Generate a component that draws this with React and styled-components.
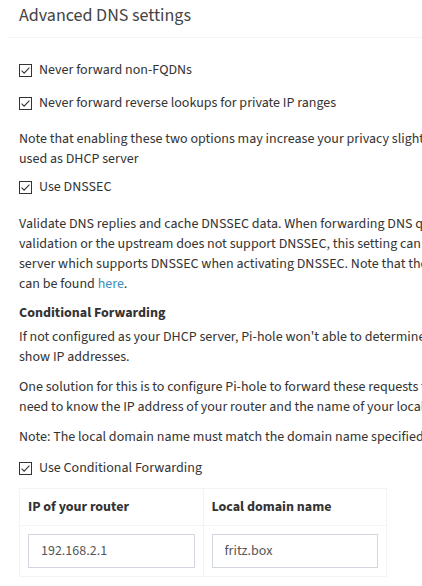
import React from "react";
import styled, { createGlobalStyle } from "styled-components";

const Global = createGlobalStyle`
  html, body { margin: 0; padding: 0; background: #fff; }
  body {
    font-family: "Source Sans 3", "Source Sans Pro", "Lato", sans-serif;
    font-size: 14px;
    line-height: 20px;
    color: #333;
    overflow: hidden;
  }
  * { box-sizing: border-box; }
`;

const Page = styled.div`
  width: 422px;
  height: 586px;
  overflow: hidden;
  background: #fff;
`;

const Box = styled.section`
  margin-left: 9px;
  width: 1100px;
`;

const BoxHeader = styled.header`
  padding: 6px 10px 11px;
  border-bottom: 1px solid #f4f4f4;
`;

const Title = styled.h3`
  margin: 0;
  font-size: 18px;
  line-height: 20px;
  font-weight: 400;
  color: #444;
`;

const BoxBody = styled.div`
  padding: 10px;
  display: flex;
  flex-direction: column;
  align-items: flex-start;
`;

const CheckRow = styled.label`
  display: flex;
  align-items: center;
  gap: 7px;
  height: 20px;
  margin-top: ${(p) => p.$mt}px;
  white-space: nowrap;
`;

const Text = styled.p`
  margin: ${(p) => p.$mt}px 0 0;
  white-space: nowrap;
`;

const Link = styled.a`
  color: #3c8dbc;
  text-decoration: none;
`;

const SubHeading = styled.h4`
  margin: ${(p) => p.$mt}px 0 0;
  font-size: 14px;
  line-height: 20px;
  font-weight: 700;
`;

const Table = styled.table`
  margin-top: ${(p) => p.$mt}px;
  width: 368px;
  border-collapse: collapse;
  table-layout: fixed;
`;

const Th = styled.th`
  border: 1px solid #f4f4f4;
  padding: 8px;
  text-align: left;
  font-weight: 700;
  line-height: 20px;
`;

const Td = styled.td`
  border: 1px solid #f4f4f4;
  padding: 8px;
`;

const Input = styled.input`
  display: block;
  width: 100%;
  height: 34px;
  padding: 6px 12px;
  border: 1px solid #d2d6de;
  font-family: inherit;
  font-size: 14px;
  color: #555;
  background: #fff;
  outline: none;
`;

const Check = () => (
  <svg width="13" height="13" viewBox="0 0 13 13" aria-hidden="true">
    <rect x="0.5" y="0.5" width="12" height="12" fill="#fff" stroke="#333" strokeWidth="1" />
    <polyline points="2.6,6.6 5.1,9.1 10.4,3.6" fill="none" stroke="#333" strokeWidth="1.1" />
  </svg>
);

const Checkbox = ({ mt, children }) => (
  <CheckRow $mt={mt}>
    <Check />
    <span>{children}</span>
  </CheckRow>
);

export default function App() {
  return (
    <Page>
      <Global />
      <Box>
        <BoxHeader>
          <Title>Advanced DNS settings</Title>
        </BoxHeader>
        <BoxBody>
          <Checkbox mt={12}>Never forward non-FQDNs</Checkbox>
          <Checkbox mt={13}>Never forward reverse lookups for private IP ranges</Checkbox>
          <Text $mt={16}>
            Note that enabling these two options may increase your privacy slightly, but may also prevent you from being able to access local hostnames if the Pi-hole is not
            <br />
            used as DHCP server
          </Text>
          <Checkbox mt={8}>Use DNSSEC</Checkbox>
          <Text $mt={17}>
            Validate DNS replies and cache DNSSEC data. When forwarding DNS queries, dnsmasq requests the DNSSEC records needed to validate the replies. If a domain fails
            <br />
            validation or the upstream does not support DNSSEC, this setting can cause issues resolving domains. Use Google, Cloudflare, DNS.WATCH, Quad9, or another DNS
            <br />
            server which supports DNSSEC when activating DNSSEC. Note that the size of your log might increase significantly when enabling DNSSEC. A DNSSEC resolver test
            <br />
            can be found <Link href="#">here</Link>.
          </Text>
          <SubHeading $mt={9}>Conditional Forwarding</SubHeading>
          <Text $mt={4}>
            If not configured as your DHCP server, Pi-hole won't able to determine the names of devices on your local network. As a result, tables such as Top Clients will only
            <br />
            show IP addresses.
          </Text>
          <Text $mt={10}>
            One solution for this is to configure Pi-hole to forward these requests to your DHCP server (most likely your router), but only for devices on your home network. To configure this we will
            <br />
            need to know the IP address of your router and the name of your local network.
          </Text>
          <Text $mt={10}>
            Note: The local domain name must match the domain name specified in your DHCP server for this to work. You can likely find it within the DHCP settings.
          </Text>
          <Checkbox mt={11}>Use Conditional Forwarding</Checkbox>
          <Table $mt={10}>
            <thead>
              <tr>
                <Th>IP of your router</Th>
                <Th>Local domain name</Th>
              </tr>
            </thead>
            <tbody>
              <tr>
                <Td>
                  <Input defaultValue="192.168.2.1" />
                </Td>
                <Td>
                  <Input defaultValue="fritz.box" />
                </Td>
              </tr>
            </tbody>
          </Table>
        </BoxBody>
      </Box>
    </Page>
  );
}
